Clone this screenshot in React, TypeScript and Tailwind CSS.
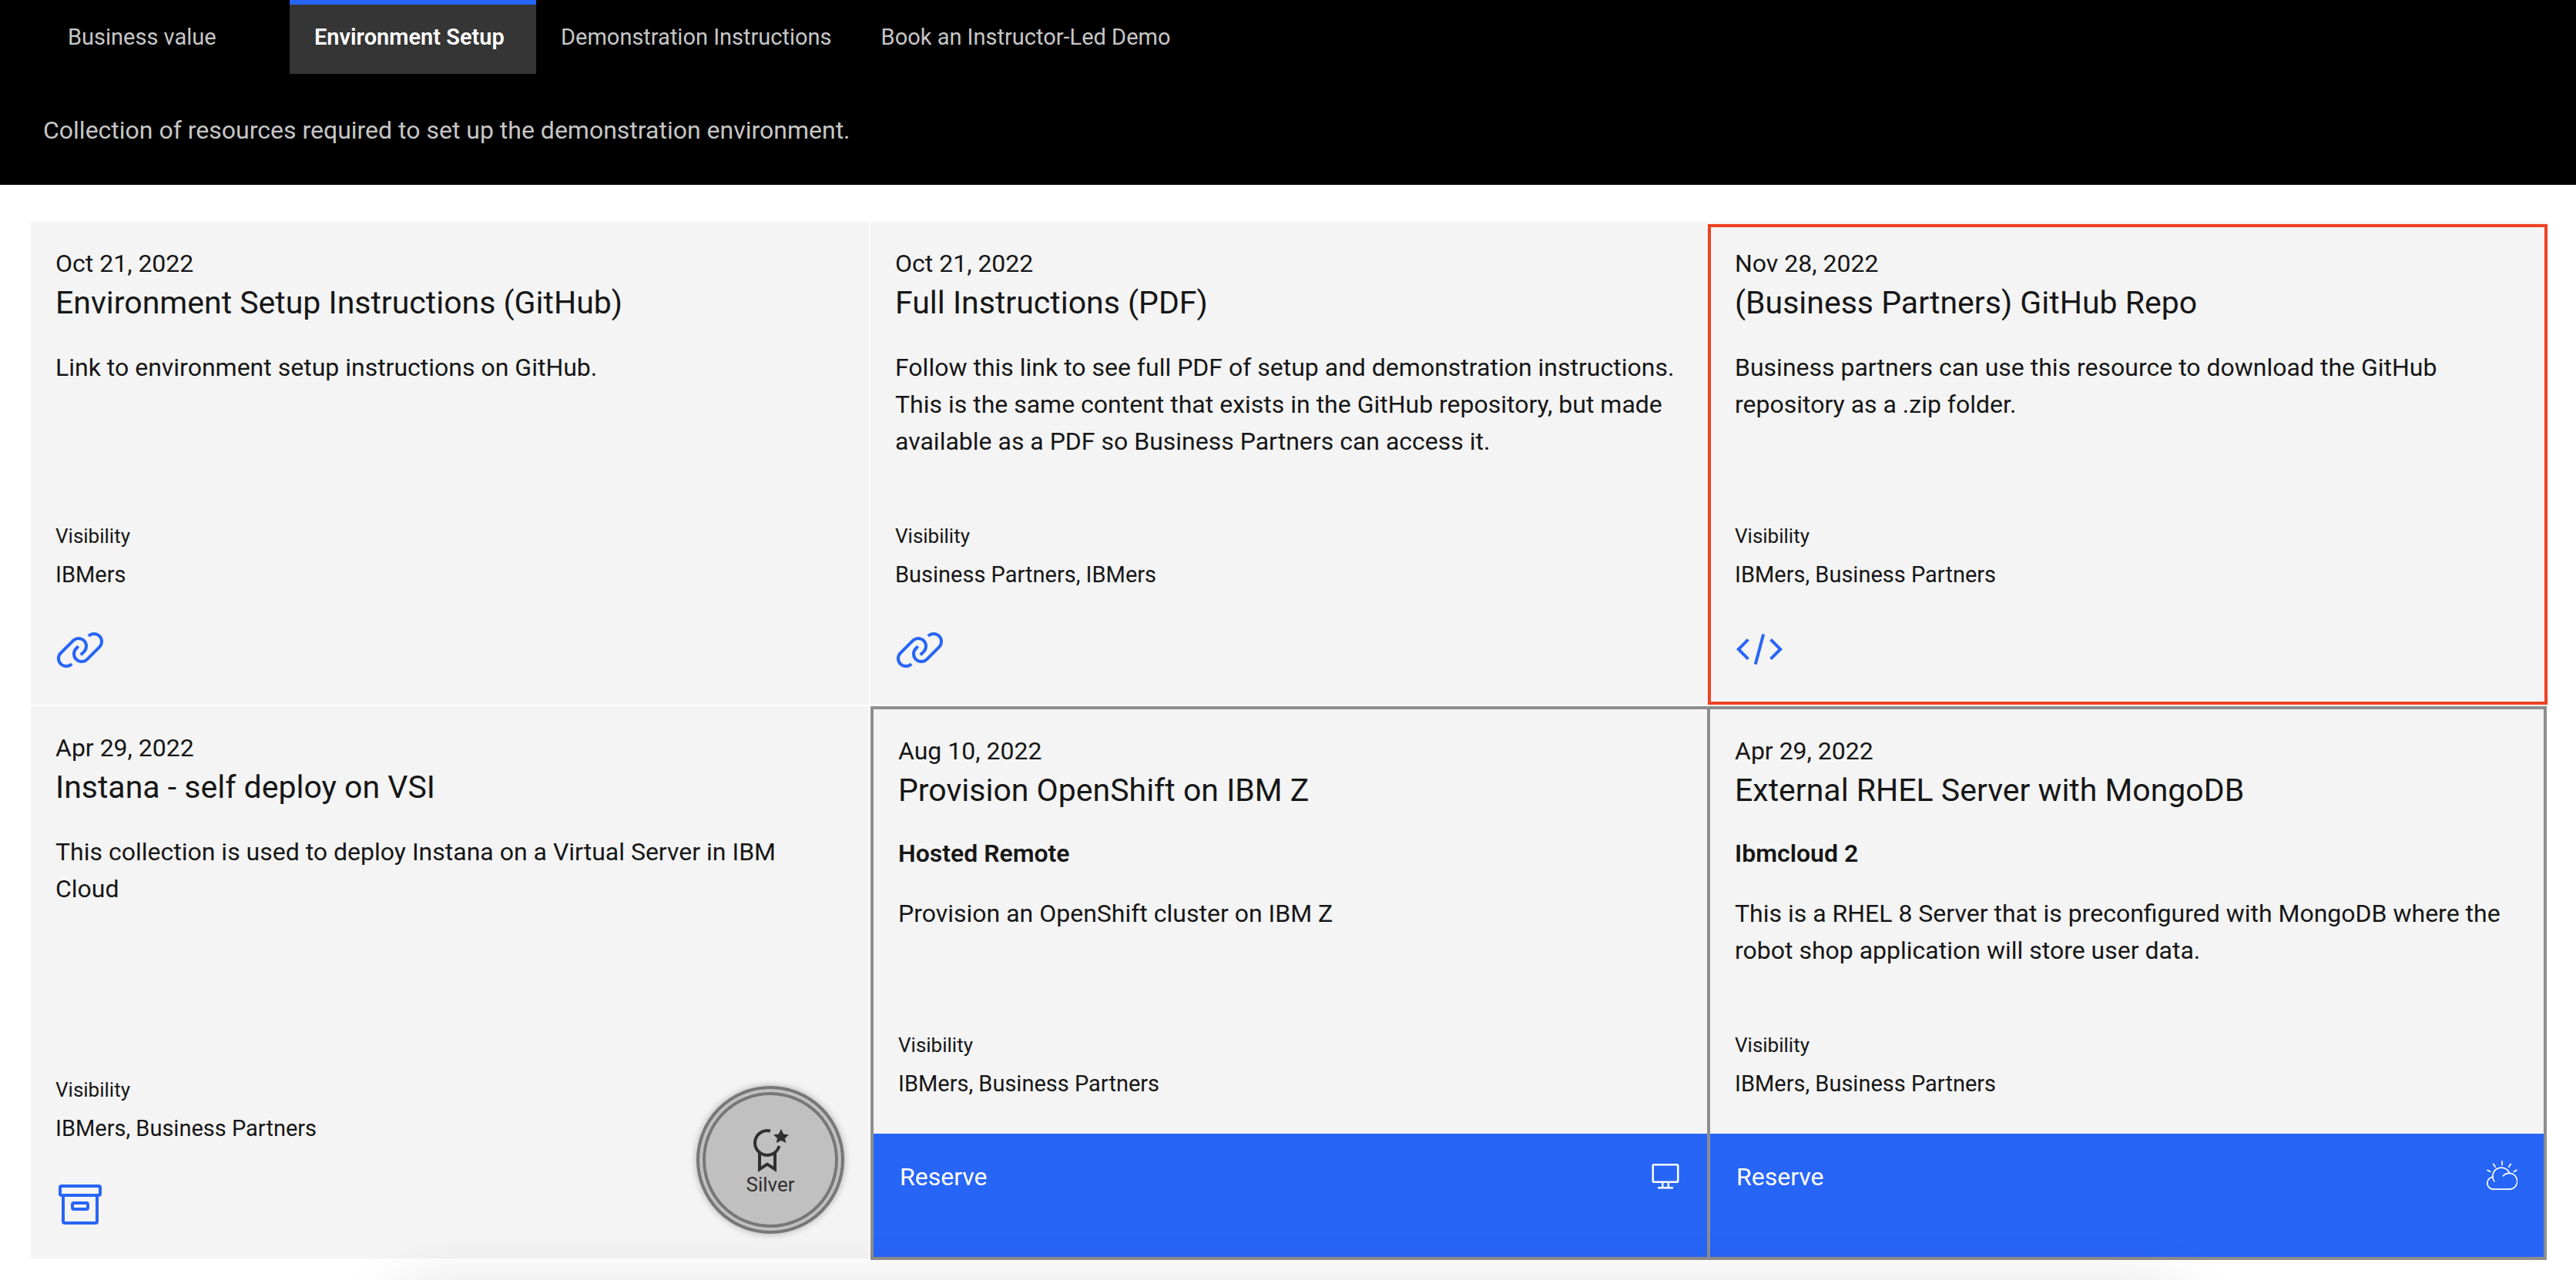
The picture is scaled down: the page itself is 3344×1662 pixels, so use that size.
import React from 'react';

type IconProps = { className?: string };

function LinkIcon({ className }: IconProps) {
  return (
    <svg viewBox="0 0 32 32" fill="currentColor" aria-hidden="true" className={className}>
      <path d="M29.25,6.76a6,6,0,0,0-8.5,0l1.42,1.42a4,4,0,1,1,5.67,5.67l-8,8a4,4,0,1,1-5.67-5.66l1.41-1.42-1.41-1.42-1.42,1.42a6,6,0,0,0,0,8.5A6,6,0,0,0,17,25a6,6,0,0,0,4.27-1.76l8-8A6,6,0,0,0,29.25,6.76Z" />
      <path d="M4.19,24.82a4,4,0,0,1,0-5.67l8-8a4,4,0,0,1,5.67,0A3.94,3.94,0,0,1,19,14a4,4,0,0,1-1.17,2.85L15.71,19l1.42,1.42,2.12-2.12a6,6,0,0,0-8.51-8.51l-8,8a6,6,0,0,0,0,8.51A6,6,0,0,0,7,28a6.07,6.07,0,0,0,4.28-1.76L9.86,24.82A4,4,0,0,1,4.19,24.82Z" />
    </svg>
  );
}

function CodeIcon({ className }: IconProps) {
  return (
    <svg viewBox="0 0 32 32" fill="currentColor" aria-hidden="true" className={className}>
      <path d="M31 16l-7 7-1.41-1.41L28.17 16l-5.58-5.59L24 9l7 7zM1 16l7-7 1.41 1.41L3.83 16l5.58 5.59L8 23l-7-7zM12.42 25.48L17.64 6l1.93.52L14.35 26z" />
    </svg>
  );
}

function BoxIcon({ className }: IconProps) {
  return (
    <svg viewBox="0 0 32 32" fill="currentColor" aria-hidden="true" className={className}>
      <path d="M20,21H12a2,2,0,0,1-2-2V17a2,2,0,0,1,2-2h8a2,2,0,0,1,2,2v2A2,2,0,0,1,20,21Zm-8-4v2h8V17Z" />
      <path d="M28,4H4A2,2,0,0,0,2,6v4a2,2,0,0,0,2,2V28a2,2,0,0,0,2,2H26a2,2,0,0,0,2-2V12a2,2,0,0,0,2-2V6A2,2,0,0,0,28,4ZM26,28H6V12H26Zm2-18H4V6H28v4Z" />
    </svg>
  );
}

function MedalIcon({ className }: IconProps) {
  return (
    <svg viewBox="0 0 32 32" fill="currentColor" aria-hidden="true" className={className}>
      <path d="M23 2L24.59 5.23 28 5.72 25.5 8.04 26.1 11 23 9.49 19.9 11 20.5 8.04 18 5.72 21.41 5.23z" />
      <path d="M22.717,13.249l-1.938-.498A6.994,6.994,0,1,1,15.75,4.22l.499-1.937A8.99,8.99,0,0,0,8,17.69V30l6-4,6,4V17.708A8.963,8.963,0,0,0,22.717,13.249ZM18,26.263l-4-2.667-4,2.667V19.05a8.924,8.924,0,0,0,8,.006Z" />
    </svg>
  );
}

function ScreenIcon({ className }: IconProps) {
  return (
    <svg viewBox="0 0 32 32" fill="currentColor" aria-hidden="true" className={className}>
      <path d="M28,4H4A2,2,0,0,0,2,6V22a2,2,0,0,0,2,2h8v4H8v2H24V28H20V24h8a2,2,0,0,0,2-2V6A2,2,0,0,0,28,4ZM18,28H14V24h4Zm10-6H4V6H28Z" />
    </svg>
  );
}

function CloudIcon({ className }: IconProps) {
  return (
    <svg viewBox="0 0 40 40" fill="none" stroke="currentColor" strokeWidth="1.7" aria-hidden="true" className={className}>
      <path d="M20 1.3v6M8.3 4.7l3.3 5M31.7 4.7l-3.3 5M.4 13l4.9 2.7M39.6 13l-4.9 2.7" />
      <path d="M10.3 28.5A11.3 11.3 0 1 1 29.7 17.5" />
      <path d="M8.7 22.2A8 8 0 0 0 8.9 38.2H29A10.4 10.4 0 1 0 21 21.5" />
    </svg>
  );
}

type CardProps = {
  date: string;
  title: string;
  kind?: string;
  text: string;
  visibility: string;
};

function CardText({ date, title, kind, text, visibility }: CardProps) {
  return (
    <div className="flex flex-1 flex-col px-8 pt-[30px]">
      <time className="text-[32px] leading-[48px]">{date}</time>
      <h2 className="mt-[3px] text-[41px] leading-[48px]">{title}</h2>
      {kind && <strong className="mt-[34px] text-[32px] leading-[48px] font-semibold">{kind}</strong>}
      <p className={kind ? 'mt-[30px] text-[32px] leading-[48px]' : 'mt-[36px] text-[32px] leading-[48px]'}>{text}</p>
      <dl className="mt-auto pt-[83px]">
        <dt className="text-[26px] leading-[32px]">Visibility</dt>
        <dd className="mt-[10px] text-[29px] leading-[48px]">{visibility}</dd>
      </dl>
    </div>
  );
}

function LinkCard({ icon, highlighted, children, ...card }: CardProps & { icon: React.ReactNode; highlighted?: boolean; children?: React.ReactNode }) {
  return (
    <article className="relative flex flex-col bg-[#f4f4f4]">
      <CardText {...card} />
      <a href="#open" aria-label={card.title} className="mt-[41px] mb-10 ml-8 w-16 text-[#2765f7]">
        {icon}
      </a>
      {highlighted && <div className="pointer-events-none absolute top-[3px] right-px bottom-0 -left-[3px] border-4 border-[#ef4023]" />}
      {children}
    </article>
  );
}

function ReserveCard({ icon, className, ...card }: CardProps & { icon: React.ReactNode; className: string }) {
  return (
    <article className={className}>
      <CardText {...card} />
      <button type="button" className="mt-[41px] flex h-40 items-start justify-between bg-[#2765f7] px-[34px] pt-[34px] text-[32px] leading-[44px] text-white">
        Reserve
        {icon}
      </button>
    </article>
  );
}

const tabs = ['Business value', 'Environment Setup', 'Demonstration Instructions', 'Book an Instructor-Led Demo'];

function Tabs() {
  return (
    <nav className="flex pl-14">
      {tabs.map((tab, i) => (
        <a
          key={tab}
          href="#tab"
          aria-current={i === 1 ? 'page' : undefined}
          className={
            i === 1
              ? 'min-w-[320px] border-t-[6px] border-[#2765f7] bg-[#353535] px-8 pb-[6px] text-[29px] leading-[84px] font-semibold text-white'
              : i === 0
                ? 'min-w-[320px] border-t-[6px] border-transparent px-8 pb-[6px] text-[29px] leading-[84px] text-[#c6c6c6]'
                : 'border-t-[6px] border-transparent px-8 pb-[6px] text-[29px] leading-[84px] text-[#c6c6c6]'
          }
        >
          {tab}
        </a>
      ))}
    </nav>
  );
}

export default function App() {
  return (
    <div className="relative min-h-screen overflow-hidden bg-white font-[Roboto,sans-serif] text-[#161616]">
      <header className="bg-black">
        <Tabs />
        <p className="pt-[49px] pb-[47px] pl-14 text-[32px] leading-[48px] text-[#c6c6c6]">
          Collection of resources required to set up the demonstration environment.
        </p>
      </header>

      <main className="grid grid-cols-3 gap-0.5 pt-12 pr-9 pb-[26px] pl-10">
        <LinkCard
          date="Oct 21, 2022"
          title="Environment Setup Instructions (GitHub)"
          text="Link to environment setup instructions on GitHub."
          visibility="IBMers"
          icon={<LinkIcon className="size-16" />}
        />
        <LinkCard
          date="Oct 21, 2022"
          title="Full Instructions (PDF)"
          text="Follow this link to see full PDF of setup and demonstration instructions. This is the same content that exists in the GitHub repository, but made available as a PDF so Business Partners can access it."
          visibility="Business Partners, IBMers"
          icon={<LinkIcon className="size-16" />}
        />
        <LinkCard
          highlighted
          date="Nov 28, 2022"
          title="(Business Partners) GitHub Repo"
          text="Business partners can use this resource to download the GitHub repository as a .zip folder."
          visibility="IBMers, Business Partners"
          icon={<CodeIcon className="size-16" />}
        />
        <div className="grid pb-0.5">
          <LinkCard
            date="Apr 29, 2022"
            title="Instana - self deploy on VSI"
            text="This collection is used to deploy Instana on a Virtual Server in IBM Cloud"
            visibility="IBMers, Business Partners"
            icon={<BoxIcon className="size-16" />}
          >
            <div className="absolute right-8 bottom-8 size-48 rounded-full border-4 border-[#777] bg-[#c0c0c0] p-1 shadow-[0_0_10px_rgba(0,0,0,0.3)]">
              <div className="flex size-full flex-col items-center justify-center rounded-full border-4 border-[#777] text-[#303030]">
                <MedalIcon className="size-16" />
                <span className="text-[26px] leading-6">Silver</span>
              </div>
            </div>
          </LinkCard>
        </div>
        <div className="col-span-2 mr-0.5 flex">
          <ReserveCard
            className="flex flex-1 flex-col border-4 border-[#8d8d8d] bg-[#f4f4f4]"
            date="Aug 10, 2022"
            title="Provision OpenShift on IBM Z"
            kind="Hosted Remote"
            text="Provision an OpenShift cluster on IBM Z"
            visibility="IBMers, Business Partners"
            icon={<ScreenIcon className="size-10" />}
          />
          <ReserveCard
            className="-ml-1 flex flex-1 flex-col border-4 border-[#8d8d8d] bg-[#f4f4f4]"
            date="Apr 29, 2022"
            title="External RHEL Server with MongoDB"
            kind="Ibmcloud 2"
            text="This is a RHEL 8 Server that is preconfigured with MongoDB where the robot shop application will store user data."
            visibility="IBMers, Business Partners"
            icon={<CloudIcon className="size-10" />}
          />
        </div>
      </main>

      <div className="pointer-events-none absolute inset-x-[540px] -bottom-24 h-16 shadow-[0_0_80px_20px_rgba(0,0,0,0.14)]" />
    </div>
  );
}
